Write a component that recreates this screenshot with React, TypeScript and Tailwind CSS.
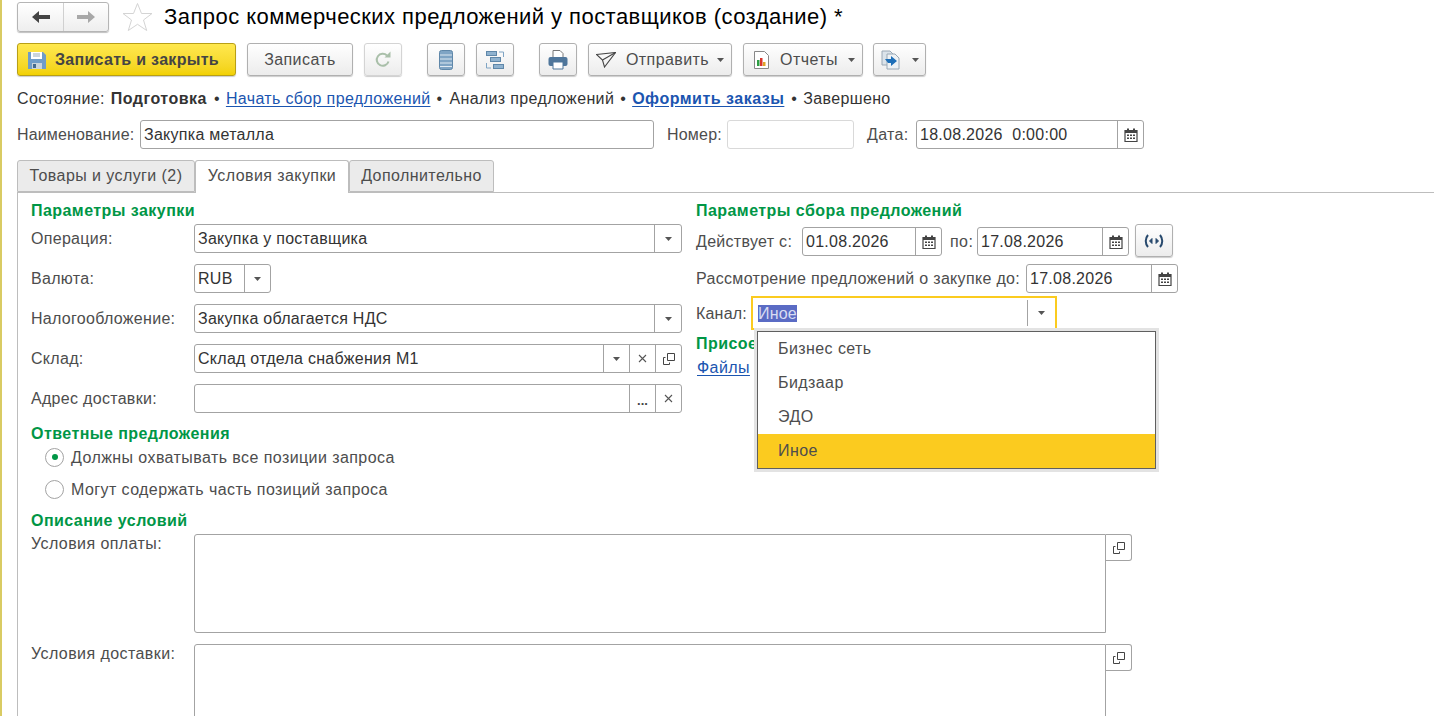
import React from 'react';

const Caret = () => (
  <svg width="7" height="4" viewBox="0 0 7 4" className="shrink-0">
    <path d="M0 0h7L3.5 4z" fill="#555" />
  </svg>
);

const Calendar = () => (
  <svg width="14" height="14" viewBox="0 0 14 14">
    <path d="M1 2.5h12v11H1z" fill="#fff" stroke="#444" strokeWidth="1.2" />
    <path d="M1 2h12v3H1z" fill="#444" />
    <path d="M3 .5h2v3H3zM9 .5h2v3H9z" fill="#444" />
    <path d="M3 6.5h2v1.6H3zM6 6.5h2v1.6H6zM9 6.5h2v1.6H9zM3 9.5h2v1.6H3zM6 9.5h2v1.6H6zM9 9.5h2v1.6H9z" fill="#444" />
  </svg>
);

const Cross = () => (
  <svg width="9" height="9" viewBox="0 0 9 9">
    <path d="M1 1l7 7M8 1L1 8" stroke="#555" strokeWidth="1.1" />
  </svg>
);

const OpenIcon = () => (
  <svg width="12" height="12" viewBox="0 0 12 12" fill="none" stroke="#444" strokeWidth="1">
    <path d="M4.5.5h7v7h-7z" />
    <path d="M2.5 4.5h-2v7h6v-2" />
  </svg>
);

const Dots = () => <span className="mt-[4px] text-[13px] font-bold leading-none tracking-normal text-[#444]">...</span>;

function Input({
  value,
  className = '',
  buttons = [],
  pale = false,
}: {
  value?: string;
  className?: string;
  buttons?: { w: string; icon: React.ReactNode }[];
  pale?: boolean;
}) {
  return (
    <div className={`flex h-[29px] items-stretch rounded-[3px] border bg-white ${pale ? 'border-[#d9d9d9]' : 'border-[#a3a3a3]'} ${className}`}>
      <div className="flex-1 truncate pl-[3px] leading-[27px] tracking-[0.27px] text-[#333]">{value}</div>
      {buttons.map((b, i) => (
        <div key={i} className={`flex items-center justify-center border-l border-[#a3a3a3] ${b.w}`}>
          {b.icon}
        </div>
      ))}
    </div>
  );
}

function ToolButton({ className = '', children }: { className?: string; children: React.ReactNode }) {
  return (
    <div className={`flex h-[33px] shrink-0 items-center justify-center rounded-[3px] border border-[#b0b0b0] bg-gradient-to-b from-white to-[#ececec] shadow-[0_1px_1px_rgba(0,0,0,0.2)] ${className}`}>
      {children}
    </div>
  );
}

const SectionTitle = ({ children, className = '' }: { children: React.ReactNode; className?: string }) => (
  <div className={`h-[16px] pt-[1px] font-bold leading-[16px] tracking-[0.45px] text-[#009646] ${className}`}>{children}</div>
);

function FormRow({ label, children }: { label: string; children: React.ReactNode }) {
  return (
    <div className="mb-[11px] flex h-[29px] items-center">
      <div className="w-[163px] shrink-0 tracking-[0.3px] text-[#4d4d4d]">{label}</div>
      {children}
    </div>
  );
}

const caret = { w: 'w-[27px]', icon: <Caret /> };
const calendar = { w: 'w-[26px]', icon: <Calendar /> };

const App: React.FC = () => {
  return (
    <div className="relative h-[716px] w-[1434px] overflow-hidden border-l-2 border-[#d9cb63] bg-white pl-[15px] text-[16px] tracking-[0.42px] text-[#333] [font-family:'Liberation_Sans',Arial,sans-serif]">
      {/* Title */}
      <div className="flex h-[43px] items-start pt-[2px]">
        <div className="flex h-[30px] w-[92px] rounded-[3px] border border-[#b5b5b5] bg-gradient-to-b from-white to-[#eeeeee] shadow-[0_1px_1px_rgba(0,0,0,0.25)]">
          <div className="flex w-[46px] items-center justify-center border-r border-[#d0d0d0]">
            <svg width="18" height="12" viewBox="0 0 18 12"><path d="M0 6l7-6v4h11v4H7v4z" fill="#444" /></svg>
          </div>
          <div className="flex flex-1 items-center justify-center">
            <svg width="18" height="12" viewBox="0 0 18 12"><path d="M18 6l-7-6v4H0v4h11v4z" fill="#a8a8a8" /></svg>
          </div>
        </div>
        <svg width="31" height="30" viewBox="0 0 31 30" className="ml-[13px]">
          <path d="M15.5 1.5l4 10h10.500l-8.500 6.500 3.200 10.500-9.200-6.200-9.200 6.200 3.200-10.500-8.500-6.500h10.500z" fill="#fff" stroke="#d4d4d4" />
        </svg>
        <div className="ml-[11px] whitespace-nowrap text-[22px] leading-[30px] tracking-[0.45px] text-black">
          Запрос коммерческих предложений у поставщиков (создание) *
        </div>
      </div>

      {/* Toolbar */}
      <div className="flex h-[33px] items-center">
        <div className="flex h-[33px] w-[219px] shrink-0 items-center rounded-[3px] border border-[#b89f16] bg-gradient-to-b from-[#ffe84d] to-[#f2d100] pl-[10px] shadow-[0_1px_1px_rgba(0,0,0,0.2)]">
          <svg width="18" height="18" viewBox="0 0 18 18">
            <path d="M0 1h15l3 3v14H0z" fill="#6f9cc9" />
            <path d="M3 1h11v7H3z" fill="#fff" />
            <path d="M5 3h7M5 5h7" stroke="#9ab" />
            <path d="M4 12h10v6H4z" fill="#c9d3dc" />
            <path d="M5 13h3v4H5z" fill="#44698f" />
          </svg>
          <span className="ml-[9px] whitespace-nowrap font-bold tracking-[0.3px] text-[#444]">Записать и закрыть</span>
        </div>
        <ToolButton className="ml-[11px] w-[106px] text-[#4d4d4d]">Записать</ToolButton>
        <ToolButton className="ml-[11px] w-[38px] border-[#d4d4d4]">
          <svg width="18" height="18" viewBox="0 0 18 18" fill="none">
            <path d="M14.500 10.500A6 6 0 1 1 13 4.500" stroke="#a9bfa9" strokeWidth="2" />
            <path d="M10.500 6.500h6v-6z" fill="#a9bfa9" />
          </svg>
        </ToolButton>
        <ToolButton className="ml-[25px] w-[38px]">
          <svg width="14" height="20" viewBox="0 0 14 20">
            <rect x="0.500" y="0.500" width="13" height="19" rx="2" fill="#7fa4c4" stroke="#5f87a9" />
            <path d="M1 5h12M1 9h12M1 13h12M1 16.500h12" stroke="#dfe9f1" strokeWidth="1.200" />
          </svg>
        </ToolButton>
        <ToolButton className="ml-[11px] w-[38px]">
          <svg width="18" height="18" viewBox="0 0 18 18" fill="none">
            <path d="M13 1h4.500v5M5 17H.5v-5" stroke="#7fa4c4" />
            <rect x="0.500" y="0.500" width="10" height="4" fill="#8fb2cf" stroke="#5f87a9" />
            <rect x="4.500" y="6.500" width="10" height="4" fill="#8fb2cf" stroke="#5f87a9" />
            <rect x="7.500" y="13.500" width="10" height="4" fill="#8fb2cf" stroke="#5f87a9" />
          </svg>
        </ToolButton>
        <ToolButton className="ml-[25px] w-[38px]">
          <svg width="20" height="20" viewBox="0 0 20 20">
            <path d="M5 .5h7l3 3V8H5z" fill="#fff" stroke="#777" />
            <rect x="0.500" y="7" width="19" height="9" rx="2" fill="#4f769b" />
            <path d="M5 12h10v7H5z" fill="#fff" stroke="#4f769b" />
          </svg>
        </ToolButton>
        <ToolButton className="ml-[11px] w-[144px] text-[#4d4d4d]">
          <svg width="20" height="16" viewBox="0 0 20 16" fill="none" stroke="#444" strokeWidth="1.100">
            <path d="M.5 2.500L19.500.5 8.500 15 6.500 8z" />
            <path d="M6.500 8L19.500.5" />
          </svg>
          <span className="ml-[10px] mr-[8px]">Отправить</span>
          <Caret />
        </ToolButton>
        <ToolButton className="ml-[11px] w-[120px] pl-[3px] text-[#4d4d4d]">
          <svg width="15" height="18" viewBox="0 0 15 18">
            <path d="M.5.5h10l4 4v13H.5z" fill="#fff" stroke="#888" />
            <path d="M3 9h2.500v6H3z" fill="#2f9e44" />
            <path d="M6 7h2.500v8H6z" fill="#d9352b" />
            <path d="M9 11h2.500v4H9z" fill="#e0a526" />
          </svg>
          <span className="ml-[11px] mr-[10px]">Отчеты</span>
          <Caret />
        </ToolButton>
        <ToolButton className="ml-[10px] w-[53px]">
          <svg width="20" height="20" viewBox="0 0 20 20">
            <path d="M1 1h8l3 3v11H1z" fill="#dbe3ea" stroke="#9aa8b5" />
            <path d="M6 4h8l4 4v11H6z" fill="#eef2f5" stroke="#9aa8b5" />
            <path d="M4 9h6V6l6 5-6 5v-3H7z" fill="#1e6fb8" />
          </svg>
          <span className="ml-[11px]"><Caret /></span>
        </ToolButton>
      </div>

      {/* State */}
      <div className="mt-[12px] flex h-[22px] items-center whitespace-nowrap leading-[22px] tracking-[0.35px] text-[#333]">
        <span>Состояние:</span>
        <span className="ml-[6px] font-bold tracking-[0.5px]">Подготовка</span>
        <span className="ml-[7px] mr-[6px]">•</span>
        <span className="text-[#1b55b0] underline underline-offset-2">Начать сбор предложений</span>
        <span className="ml-[6px] mr-[7px]">•</span>
        <span>Анализ предложений</span>
        <span className="mx-[6px]">•</span>
        <span className="font-bold tracking-[0.5px] text-[#1b55b0] underline underline-offset-2">Оформить заказы</span>
        <span className="ml-[7px] mr-[6px]">•</span>
        <span>Завершено</span>
      </div>

      {/* Name row */}
      <div className="mt-[10px] flex h-[29px] items-center">
        <span className="w-[123px] shrink-0 whitespace-nowrap tracking-[0.15px] text-[#4d4d4d]">Наименование:</span>
        <Input value="Закупка металла" className="w-[514px]" />
        <span className="ml-[13px] w-[60px] tracking-[0.2px] text-[#4d4d4d]">Номер:</span>
        <Input className="w-[127px]" pale />
        <span className="ml-[13px] w-[49px] tracking-[0.3px] text-[#4d4d4d]">Дата:</span>
        <Input value={'18.08.2026\u00A0\u00A00:00:00'} className="w-[228px]" buttons={[calendar]} />
      </div>

      {/* Tabs */}
      <div className="mt-[11px] flex h-[33px] items-stretch">
        <div className="mb-[1px] flex w-[178px] items-center justify-center rounded-t-[3px] border border-[#bdbdbd] bg-[#ebebeb] pb-[1px] text-[#4d4d4d]">Товары и услуги (2)</div>
        <div className="z-10 flex w-[154px] items-center justify-center rounded-t-[3px] border border-b-0 border-[#bdbdbd] bg-white pb-[2px] text-[#4d4d4d]">Условия закупки</div>
        <div className="mb-[1px] flex w-[145px] items-center justify-center rounded-t-[3px] border border-[#bdbdbd] bg-[#ebebeb] pb-[1px] text-[#4d4d4d]">Дополнительно</div>
      </div>

      {/* Panel */}
      <div className="-mt-[1px] flex h-[600px] border-l border-t border-[#bdbdbd] pl-[13px] pt-[9px]">
        {/* Left column */}
        <div className="w-[651px] shrink-0">
          <SectionTitle className="mb-[6px]">Параметры закупки</SectionTitle>
          <FormRow label="Операция:">
            <Input value="Закупка у поставщика" className="w-[489px]" buttons={[caret]} />
          </FormRow>
          <FormRow label="Валюта:">
            <Input value="RUB" className="w-[77px]" buttons={[{ w: 'w-[26px]', icon: <Caret /> }]} />
          </FormRow>
          <FormRow label="Налогообложение:">
            <Input value="Закупка облагается НДС" className="w-[489px]" buttons={[caret]} />
          </FormRow>
          <FormRow label="Склад:">
            <Input
              value="Склад отдела снабжения М1"
              className="w-[489px]"
              buttons={[
                { w: 'w-[26px]', icon: <Caret /> },
                { w: 'w-[26px]', icon: <Cross /> },
                { w: 'w-[26px]', icon: <OpenIcon /> },
              ]}
            />
          </FormRow>
          <FormRow label="Адрес доставки:">
            <Input
              className="w-[489px]"
              buttons={[
                { w: 'w-[26px]', icon: <Dots /> },
                { w: 'w-[26px]', icon: <Cross /> },
              ]}
            />
          </FormRow>

          <SectionTitle className="mt-[12px]">Ответные предложения</SectionTitle>
          <div className="ml-[14px] mt-[6px] flex h-[20px] items-center whitespace-nowrap text-[#4d4d4d]">
            <span className="mr-[7px] flex h-[19px] w-[19px] shrink-0 items-center justify-center rounded-full border border-[#a3a3a3]">
              <span className="h-[6px] w-[6px] rounded-full bg-[#009646]" />
            </span>
            <span className="pt-[2px]">Должны охватывать все позиции запроса</span>
          </div>
          <div className="ml-[14px] mt-[12px] flex h-[20px] items-center whitespace-nowrap text-[#4d4d4d]">
            <span className="mr-[7px] h-[19px] w-[19px] shrink-0 rounded-full border border-[#a3a3a3]" />
            <span className="pt-[2px]">Могут содержать часть позиций запроса</span>
          </div>

          <SectionTitle className="mt-[13px]">Описание условий</SectionTitle>
          <div className="mt-[6px] flex">
            <div className="w-[163px] shrink-0 pt-[1px] leading-[18px] text-[#4d4d4d]">Условия оплаты:</div>
            <div className="h-[99px] w-[912px] shrink-0 rounded-l-[3px] border border-[#a3a3a3]" />
            <div className="flex h-[27px] w-[26px] shrink-0 items-center justify-center rounded-r-[3px] border border-l-0 border-[#a3a3a3]"><OpenIcon /></div>
          </div>
          <div className="mt-[11px] flex">
            <div className="w-[163px] shrink-0 pt-[1px] leading-[18px] text-[#4d4d4d]">Условия доставки:</div>
            <div className="h-[99px] w-[912px] shrink-0 rounded-l-[3px] border border-[#a3a3a3]" />
            <div className="flex h-[27px] w-[26px] shrink-0 items-center justify-center rounded-r-[3px] border border-l-0 border-[#a3a3a3]"><OpenIcon /></div>
          </div>
        </div>

        {/* Right column */}
        <div className="ml-[14px] flex-1">
          <SectionTitle className="mb-[6px] whitespace-nowrap">Параметры сбора предложений</SectionTitle>
          <div className="flex h-[33px] items-center">
            <span className="mt-[2px] w-[106px] shrink-0 whitespace-nowrap tracking-[0.3px] text-[#4d4d4d]">Действует с:</span>
            <Input value="01.08.2026" className="mt-[2px] w-[140px]" buttons={[calendar]} />
            <span className="ml-[8px] mt-[2px] w-[27px] text-[#4d4d4d]">по:</span>
            <Input value="17.08.2026" className="mt-[2px] w-[152px]" buttons={[calendar]} />
            <ToolButton className="ml-[6px] w-[38px]">
              <svg width="20" height="14" viewBox="0 0 20 14" fill="none" stroke="#27496d" strokeWidth="2">
                <path d="M4 1C1 4.500 1 9.500 4 13M16 1c3 3.500 3 8.500 0 12" />
                <path d="M8 4.500L5.500 7 8 9.500zM12 4.500L14.500 7 12 9.500z" fill="#27496d" strokeWidth="1" />
              </svg>
            </ToolButton>
          </div>
          <div className="mt-[7px] flex h-[29px] items-center">
            <span className="w-[330px] shrink-0 whitespace-nowrap tracking-[0.32px] text-[#4d4d4d]">Рассмотрение предложений о закупке до:</span>
            <Input value="17.08.2026" className="w-[152px]" buttons={[calendar]} />
          </div>
          <div className="mt-[3px] flex h-[34px] items-center">
            <span className="w-[55px] shrink-0 pt-[2px] tracking-[0.2px] text-[#4d4d4d]">Канал:</span>
            <div className="flex h-[34px] w-[306px] items-stretch border-2 border-[#fbcb1f] py-[2px] pl-[5px]">
              <div className="flex-1 pt-[1px] leading-[26px]">
                <span className="bg-[#5a6bc4] tracking-[0.2px] text-[#d8dcf2]">Иное</span>
              </div>
              <div className="flex w-[28px] items-center justify-center border-l border-[#a3a3a3]"><Caret /></div>
            </div>
          </div>
          <SectionTitle className="mt-[5px] whitespace-nowrap">Присое</SectionTitle>
          <div className="ml-[1px] mt-[5px] w-fit text-[#1b55b0] underline underline-offset-2">Файлы</div>
        </div>
      </div>

      {/* Dropdown list */}
      <div className="absolute left-[755px] top-[331px] z-20 w-[399px] border border-[#5f5f5f] bg-white shadow-[0_0_0_3px_#e3e3e3]">
        <div className="flex h-[34px] items-center pl-[20px] text-[#4d4d4d]">Бизнес сеть</div>
        <div className="flex h-[34px] items-center pl-[20px] text-[#4d4d4d]">Бидзаар</div>
        <div className="flex h-[34px] items-center pl-[20px] text-[#4d4d4d]">ЭДО</div>
        <div className="flex h-[34px] items-center bg-[#fbcb1f] pl-[20px] text-[#4d4d4d]">Иное</div>
      </div>
    </div>
  );
};

export default App;
